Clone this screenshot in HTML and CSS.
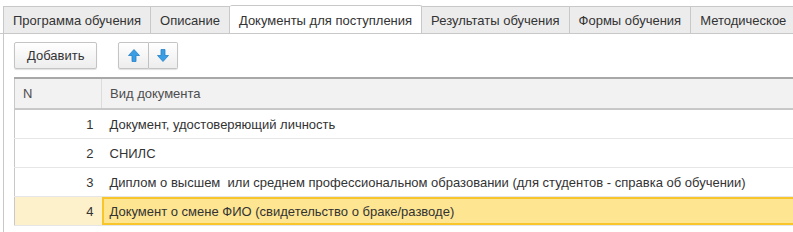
FILE: index.html
```html
<!DOCTYPE html>
<html lang="ru">
<head>
    <meta charset="UTF-8">
    <title>Документы для поступления</title>
    <link rel="stylesheet" href="styles.css">
</head>
<body>
    <div class="tabs">
        <div class="tab">Программа обучения</div>
        <div class="tab">Описание</div>
        <div class="tab active">Документы для поступления</div>
        <div class="tab">Результаты обучения</div>
        <div class="tab">Формы обучения</div>
        <div class="tab last">Методическое</div>
    </div>
    <div class="panel">
        <div class="toolbar">
            <button class="btn">Добавить</button>
            <div class="btn-group">
                <button class="btn icon-btn" title="Вверх">
                    <svg width="12" height="13" viewBox="0 0 12 13"><path d="M6 0.5 L11.5 6.5 L8 6.5 L8 12.5 L4 12.5 L4 6.5 L0.5 6.5 Z" fill="#3a9ee4" stroke="#2682c8" stroke-width="0.8"/></svg>
                </button>
                <button class="btn icon-btn" title="Вниз">
                    <svg width="12" height="13" viewBox="0 0 12 13"><path d="M6 12.5 L11.5 6.5 L8 6.5 L8 0.5 L4 0.5 L4 6.5 L0.5 6.5 Z" fill="#3a9ee4" stroke="#2682c8" stroke-width="0.8"/></svg>
                </button>
            </div>
        </div>
        <table class="grid">
            <thead>
                <tr>
                    <th class="col-n">N</th>
                    <th>Вид документа</th>
                </tr>
            </thead>
            <tbody>
                <tr>
                    <td class="col-n">1</td>
                    <td>Документ, удостоверяющий личность</td>
                </tr>
                <tr>
                    <td class="col-n">2</td>
                    <td>СНИЛС</td>
                </tr>
                <tr>
                    <td class="col-n">3</td>
                    <td>Диплом о высшем&nbsp; или среднем профессиональном образовании (для студентов - справка об обучении)</td>
                </tr>
                <tr class="selected">
                    <td class="col-n">4</td>
                    <td class="current">Документ о смене ФИО (свидетельство о браке/разводе)</td>
                </tr>
            </tbody>
        </table>
    </div>
</body>
</html>
```

FILE: styles.css
```css
body {
    margin: 0;
    background: #fff;
    font-family: "Liberation Sans", Arial, sans-serif;
    font-size: 13px;
    color: #333;
    overflow: hidden;
    width: 793px;
    height: 232px;
}
.tabs {
    display: flex;
    padding: 6px 0 0 3px;
    border-bottom: 1px solid #c8c8c8;
    white-space: nowrap;
    height: 27px;
    overflow: hidden;
}
.tab {
    flex: none;
    box-sizing: border-box;
    height: 27px;
    padding: 6px 9px 0 9px;
    background: #ececec;
    border: 1px solid #c8c8c8;
    border-bottom: none;
    border-left: none;
    color: #333;
}
.tab:first-child {
    border-left: 1px solid #c8c8c8;
}
.tab.last {
    flex: 1;
    border-right: none;
}
.tab.active {
    background: #fff;
    height: 29px;
    margin-top: -1px;
    margin-bottom: -1px;
    padding-top: 7px;
    border-radius: 2px 2px 0 0;
}
.panel {
    border-left: 1px solid #c8c8c8;
    margin-left: 3px;
    padding: 8px 0 0 10px;
    height: 200px;
}
.toolbar {
    display: flex;
    gap: 21px;
    height: 27px;
    margin-bottom: 8px;
}
.btn {
    font-family: inherit;
    font-size: 13px;
    color: #333;
    height: 27px;
    padding: 0 12px;
    background: linear-gradient(#fff, #ededed);
    border: 1px solid #c4c4c4;
    border-radius: 2px;
    box-shadow: 0 1px 1px rgba(0, 0, 0, 0.12);
}
.btn-group {
    display: flex;
}
.icon-btn {
    width: 29px;
    padding: 0;
    display: flex;
    align-items: center;
    justify-content: center;
}
.icon-btn:first-child {
    border-radius: 2px 0 0 2px;
    width: 31px;
}
.icon-btn:last-child {
    border-left: none;
    border-radius: 0 2px 2px 0;
}
.grid {
    border-collapse: collapse;
    width: 790px;
    border-top: 2px solid #a8a8a8;
    border-left: 1px solid #c8c8c8;
    table-layout: fixed;
}
.grid th {
    background: #f2f2f2;
    font-weight: normal;
    color: #4d4d4d;
    text-align: left;
    height: 29px;
    padding: 0 8px;
    border-bottom: 2px solid #c8c8c8;
    border-left: 1px solid #dcdcdc;
}
.grid th.col-n {
    width: 70px;
    border-left: none;
}
.grid td {
    height: 28px;
    padding: 0 8px;
    border-bottom: 1px solid #e6e6e6;
    white-space: nowrap;
}
.grid td.col-n {
    text-align: right;
}
.grid tr.selected td {
    background: #fdf1cc;
}
.grid tr.selected td.current {
    background: #fde591;
    box-shadow: inset 0 0 0 2px #f8c62a;
}
```
